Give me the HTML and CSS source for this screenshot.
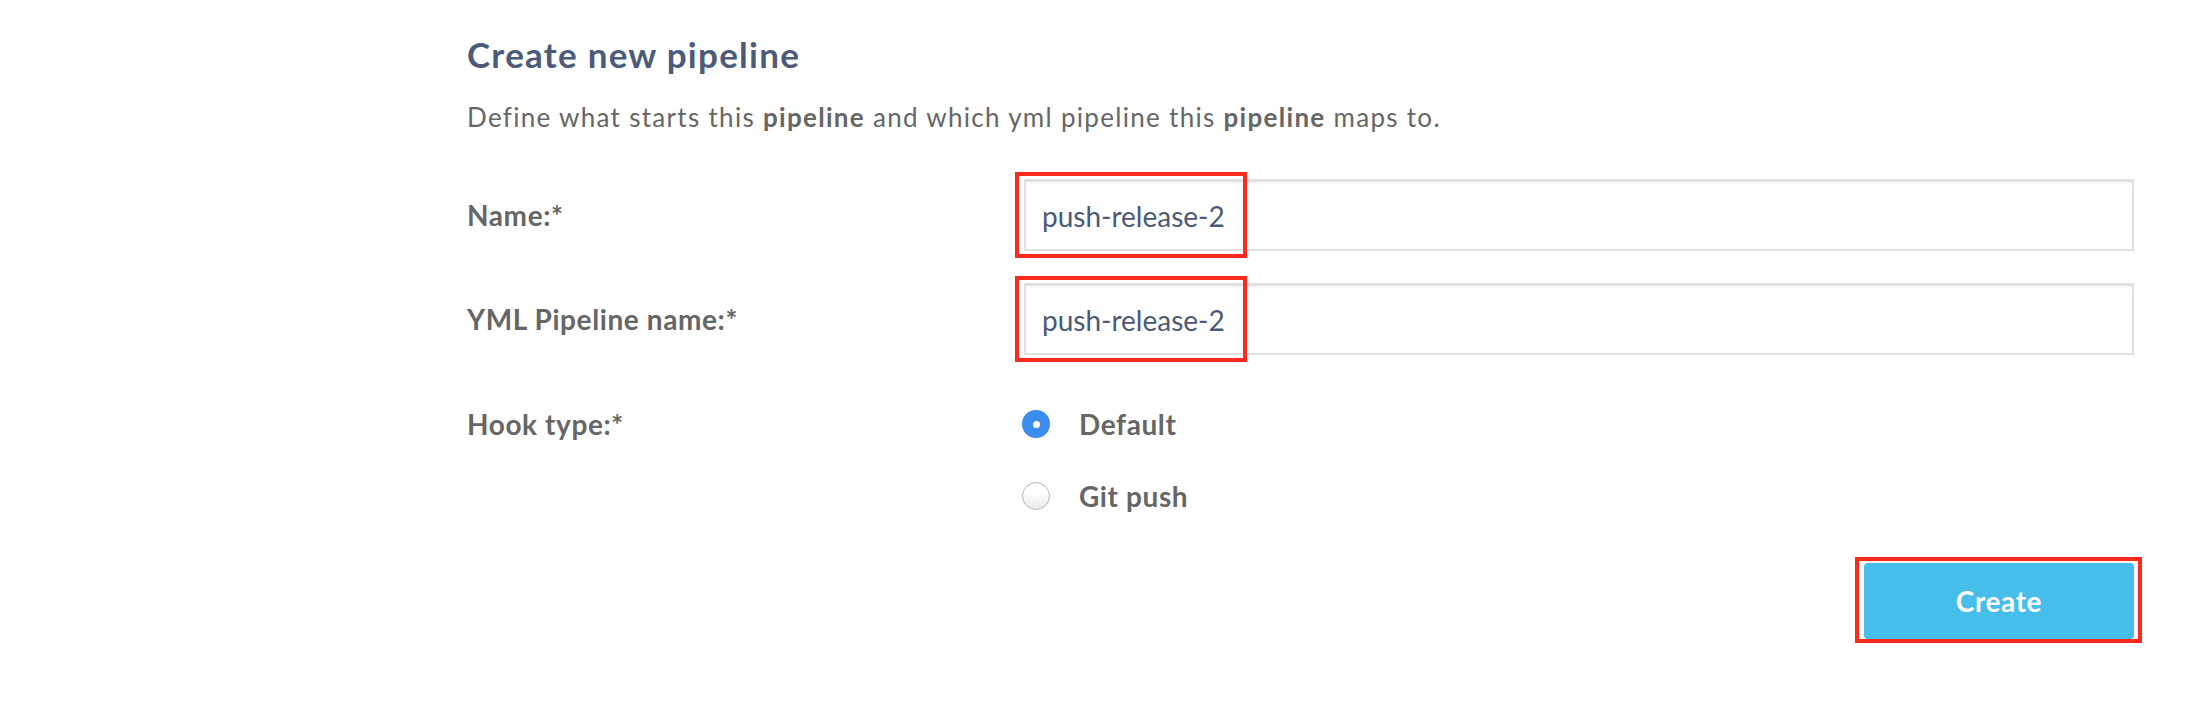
FILE: index.html
```html
<!DOCTYPE html>
<html>
<head>
<meta charset="utf-8">
<link rel="stylesheet" href="styles.css">
</head>
<body>
<div class="page">
  <h1 class="title">Create new pipeline</h1>
  <p class="desc">Define what starts this <b>pipeline</b> and which yml pipeline this <b>pipeline</b> maps to.</p>

  <div class="row row-input">
    <label class="label">Name:*</label>
    <div class="field">
      <div class="input">push-release-2</div>
      <span class="mark mark-input"></span>
    </div>
  </div>

  <div class="row row-input row-second">
    <label class="label">YML Pipeline name:*</label>
    <div class="field">
      <div class="input">push-release-2</div>
      <span class="mark mark-input"></span>
    </div>
  </div>

  <div class="row row-hook">
    <label class="label label-hook">Hook type:*</label>
    <div class="radios">
      <div class="radio-item"><span class="radio checked"></span><span class="radio-text">Default</span></div>
      <div class="radio-item"><span class="radio"></span><span class="radio-text">Git push</span></div>
    </div>
  </div>

  <div class="actions">
    <div class="btn-wrap">
      <button class="btn">Create</button>
      <span class="mark mark-btn"></span>
    </div>
  </div>
</div>
</body>
</html>
```

FILE: styles.css
```css
html, body {
  margin: 0;
  padding: 0;
  background: #ffffff;
}
body {
  font-family: Lato, "Open Sans", sans-serif;
}
.page {
  margin-left: 467px;
  width: 1667px;
  padding-top: 34px;
  padding-bottom: 50px;
}
.title {
  margin: 0;
  font-size: 35px;
  line-height: 40px;
  font-weight: 700;
  letter-spacing: 1.25px;
  color: #4b5b79;
}
.desc {
  margin: 27px 0 0 0;
  font-size: 26px;
  line-height: 32px;
  letter-spacing: 1.3px;
  color: #666666;
}
.desc b {
  font-weight: 700;
}
.row {
  display: grid;
  grid-template-columns: 557px 1fr;
}
.row-input {
  margin-top: 46px;
  align-items: center;
}
.row-second {
  margin-top: 32px;
}
.label {
  font-size: 28px;
  font-weight: 700;
  letter-spacing: 0.6px;
  color: #666666;
  line-height: 32px;
}
.field {
  position: relative;
}
.input {
  box-sizing: border-box;
  height: 72px;
  border: 2px solid #dde1e1;
  border-top-width: 3px;
  box-shadow: inset 0 2px 3px rgba(0, 0, 0, 0.04);
  padding: 0 16px;
  display: flex;
  align-items: center;
  font-size: 28px;
  color: #4b5976;
  background: #fff;
}
.mark {
  position: absolute;
  border: 4px solid #ff2a1c;
  pointer-events: none;
}
.mark-input {
  left: -9px;
  top: -7px;
  width: 224px;
  height: 78px;
}
.row-hook {
  margin-top: 45px;
  align-items: start;
}
.label-hook {
  line-height: 48px;
}
.radios {
  display: flex;
  flex-direction: column;
  gap: 24px;
}
.radio-item {
  display: flex;
  align-items: center;
  height: 48px;
}
.radio {
  box-sizing: border-box;
  flex: none;
  width: 28px;
  height: 28px;
  border-radius: 50%;
  border: 1px solid #b8b8b8;
  background: linear-gradient(#ffffff 40%, #e9e9e9);
  margin-left: -2px;
  position: relative;
}
.radio.checked {
  border: none;
  background: #3b8ced;
}
.radio.checked::after {
  content: "";
  position: absolute;
  left: 10.5px;
  top: 10.5px;
  width: 7px;
  height: 7px;
  border-radius: 50%;
  background: #ffffff;
}
.radio-text {
  margin-left: 29px;
  font-size: 28px;
  font-weight: 700;
  letter-spacing: 0.6px;
  color: #666666;
}
.actions {
  display: flex;
  justify-content: flex-end;
  margin-top: 43px;
}
.btn-wrap {
  position: relative;
  height: 76px;
}
.btn {
  display: block;
  width: 270px;
  height: 76px;
  margin: 0;
  padding: 0;
  border: none;
  border-radius: 4px;
  background: #47bde9;
  color: #ffffff;
  font-family: Lato, "Open Sans", sans-serif;
  font-size: 28px;
  font-weight: 700;
  letter-spacing: 0.6px;
}
.mark-btn {
  left: -9px;
  top: -6px;
  right: -8px;
  bottom: -4px;
}
```
